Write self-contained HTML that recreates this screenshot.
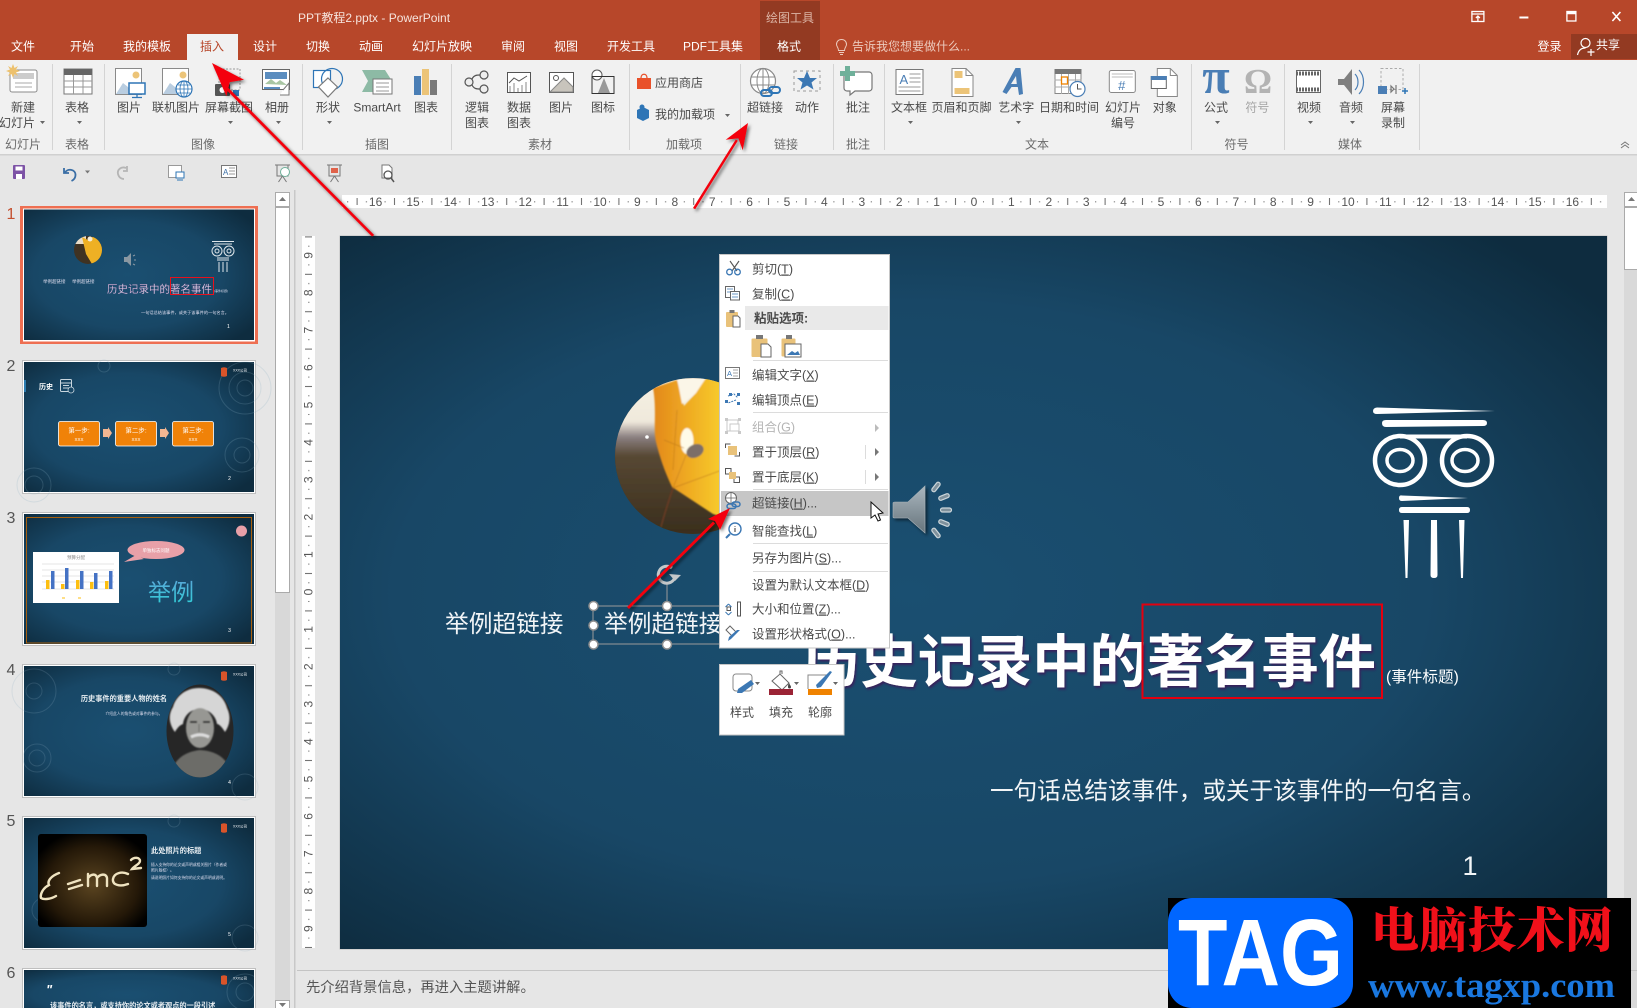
<!DOCTYPE html>
<html lang="zh"><head><meta charset="utf-8"><title>PPT教程2.pptx - PowerPoint</title>
<style>
html,body{margin:0;padding:0;width:1637px;height:1008px;overflow:hidden;background:#e6e6e6}
svg{display:block;position:absolute;left:0;top:0}
text{font-family:"Liberation Sans","Noto Sans CJK SC",sans-serif;font-size:12px;fill:#4a4a4a}
.m{text-anchor:middle}
.w{fill:#fff}
.g{fill:#6a6a6a}
.u{text-decoration:underline}
.r text{font-size:12px;fill:#555;text-anchor:middle}
.menu text{font-size:12.5px;fill:#4a4a4a}
</style></head><body>
<svg width="1637" height="1008" viewBox="0 0 1637 1008" xmlns="http://www.w3.org/2000/svg">
<defs>
<radialGradient id="sl" cx="45%" cy="50%" r="68%"><stop offset="0" stop-color="#1a4f71"/><stop offset=".6" stop-color="#184766"/><stop offset="1" stop-color="#0e2c3f"/></radialGradient>
<linearGradient id="leaf" x1="0" x2="1" y1="0" y2="0"><stop offset="0" stop-color="#e2881c"/><stop offset=".5" stop-color="#efaa22"/><stop offset="1" stop-color="#f7cc2c"/></linearGradient>
<linearGradient id="lbg" x1="0" x2="0" y1="0" y2="1"><stop offset="0" stop-color="#f6f1e4"/><stop offset=".28" stop-color="#f0e9dc"/><stop offset=".38" stop-color="#8a7f80"/><stop offset=".5" stop-color="#574833"/><stop offset="1" stop-color="#3a2e1d"/></linearGradient>
<linearGradient id="spk" x1="0" x2="0" y1="0" y2="1"><stop offset="0" stop-color="#aab6be"/><stop offset="1" stop-color="#66747c"/></linearGradient>
<linearGradient id="cy" x1="0" x2="0" y1="0" y2="1"><stop offset="0" stop-color="#5aa6d8"/><stop offset="1" stop-color="#30d0d8"/></linearGradient>
<radialGradient id="emc" cx="50%" cy="55%" r="60%"><stop offset="0" stop-color="#5a4420"/><stop offset=".7" stop-color="#241808"/><stop offset="1" stop-color="#000"/></radialGradient>
<pattern id="hr" width="37.4" height="13" patternUnits="userSpaceOnUse" patternTransform="translate(974,195)"><rect x="18.4" y="3" width="1" height="7" fill="#666"/><rect x="9" y="6" width="1" height="1.5" fill="#888"/><rect x="27.7" y="6" width="1" height="1.5" fill="#888"/></pattern>
<pattern id="vr" width="13" height="37.4" patternUnits="userSpaceOnUse" patternTransform="translate(302,592)"><rect x="3" y="18.4" width="7" height="1" fill="#666"/><rect x="6" y="9" width="1.5" height="1" fill="#888"/><rect x="6" y="27.7" width="1.5" height="1" fill="#888"/></pattern>
<clipPath id="cc"><circle cx="693" cy="456" r="78"/></clipPath>
<clipPath id="tc"><circle cx="88" cy="250" r="14"/></clipPath>
<clipPath id="t6"><rect x="24" y="970" width="230" height="38"/></clipPath>
<clipPath id="eo"><ellipse cx="200" cy="731" rx="33.5" ry="46.5"/></clipPath>
<filter id="sh" x="-20%" y="-20%" width="140%" height="140%"><feDropShadow dx="2" dy="2" stdDeviation="1.5" flood-color="#000" flood-opacity=".55"/></filter>
<filter id="ts" x="-5%" y="-20%" width="110%" height="140%"><feDropShadow dx="1.5" dy="2" stdDeviation="1" flood-color="#3a1f5a" flood-opacity=".95"/></filter>
<filter id="bl"><feGaussianBlur stdDeviation="1.6"/></filter>
<filter id="bs"><feGaussianBlur stdDeviation=".7"/></filter>
</defs>

<!-- title bar -->
<rect width="1637" height="60" fill="#b7472a"/>
<rect x="760" y="1" width="60" height="59" fill="#933a22"/>
<text x="298" y="22" style="fill:#f6e4dd">PPT教程2.pptx - PowerPoint</text>
<text x="790" y="22" class="m" style="fill:#dcb5a6">绘图工具</text>
<rect x="187" y="34" width="51" height="26" fill="#f1f1f1"/>
<text x="23" y="50.5" class="m w">文件</text><text x="82" y="50.5" class="m w">开始</text><text x="147" y="50.5" class="m w">我的模板</text>
<text x="212" y="50.5" class="m" style="fill:#b7472a">插入</text>
<text x="265" y="50.5" class="m w">设计</text><text x="318" y="50.5" class="m w">切换</text><text x="371" y="50.5" class="m w">动画</text><text x="442" y="50.5" class="m w">幻灯片放映</text><text x="513" y="50.5" class="m w">审阅</text><text x="566" y="50.5" class="m w">视图</text><text x="631" y="50.5" class="m w">开发工具</text><text x="713" y="50.5" class="m w">PDF工具集</text><text x="789" y="50.5" class="m w">格式</text>
<g fill="none" stroke="#eccabd" stroke-width="1"><path d="M841 40c-3 0-5 2-5 5 0 2 2 3 2 6h6c0-3 2-4 2-6 0-3-2-5-5-5zM838.5 53h5M839.5 55h3" transform="translate(.5,-.5)"/></g>
<text x="852" y="50.5" style="fill:#eccabd">告诉我您想要做什么...</text>
<text x="1549.500" y="50.5" class="m w">登录</text>
<rect x="1571" y="34" width="66" height="25" fill="#933a22"/>
<g fill="none" stroke="#fff" stroke-width="1.2" transform="translate(-2.5,0)"><circle cx="1588" cy="43" r="4.5"/><path d="M1580 55c1-5 4-7 8-7M1590 52h7M1593.5 49v7"/></g>
<text x="1608" y="49" class="m w">共享</text>
<!-- window buttons -->
<g fill="none" stroke="#fff" stroke-width="1.3" transform="translate(-2.6,0)"><rect x="1474.5" y="11.5" width="12" height="10"/><path d="M1474.5 14h12M1480.5 21v-5M1478.5 18l2-2 2 2"/><path d="M1522 17.5h9" stroke-width="2"/><rect x="1569.5" y="11.5" width="9" height="9.5"/><path d="M1569.5 13h9" stroke-width="2.5"/><path d="M1615 12l8 9M1623 12l-8 9" stroke-width="1.6"/></g>

<!-- ribbon -->
<rect y="60" width="1637" height="94" fill="#f1f1f1"/>
<rect y="154" width="1637" height="1.5" fill="#d0d0d0"/>
<g stroke="#d4d4d4" stroke-width="1"><path d="M52.5 64v86M104.5 64v86M302.5 64v86M451.5 64v86M629.5 64v86M740.5 64v86M833.5 64v86M884.5 64v86M1191.5 64v86M1284.5 64v86M1419.5 64v86"/></g>

<!-- ribbon labels -->
<text x="23" y="111.5" class="m">新建</text><text x="17" y="127" class="m">幻灯片</text>
<text x="77" y="111.5" class="m">表格</text>
<text x="129" y="111.5" class="m">图片</text><text x="176" y="111.5" class="m">联机图片</text><text x="229" y="111.5" class="m">屏幕截图</text><text x="277" y="111.5" class="m">相册</text>
<text x="328" y="111.5" class="m">形状</text><text x="377" y="111.5" class="m">SmartArt</text><text x="426" y="111.5" class="m">图表</text>
<text x="477" y="111.5" class="m">逻辑</text><text x="477" y="127" class="m">图表</text><text x="519" y="111.5" class="m">数据</text><text x="519" y="127" class="m">图表</text><text x="561" y="111.5" class="m">图片</text><text x="603" y="111.5" class="m">图标</text>
<text x="655" y="87">应用商店</text><text x="655" y="118.5">我的加载项</text>
<text x="765" y="111.5" class="m">超链接</text><text x="807" y="111.5" class="m">动作</text>
<text x="858" y="111.5" class="m">批注</text>
<text x="909" y="111.5" class="m">文本框</text><text x="961.5" y="111.5" class="m">页眉和页脚</text><text x="1016.3" y="111.5" class="m">艺术字</text><text x="1069" y="111.5" class="m">日期和时间</text><text x="1123" y="111.5" class="m">幻灯片</text><text x="1123" y="127" class="m">编号</text><text x="1164.7" y="111.5" class="m">对象</text>
<text x="1216" y="111.5" class="m">公式</text><text x="1257.4" y="111.5" class="m" style="fill:#a5a5a5">符号</text>
<text x="1309" y="111.5" class="m">视频</text><text x="1351" y="111.5" class="m">音频</text><text x="1393" y="111.5" class="m">屏幕</text><text x="1393" y="127" class="m">录制</text>
<text x="23" y="148.5" class="m g">幻灯片</text><text x="77" y="148.5" class="m g">表格</text><text x="203" y="148.5" class="m g">图像</text><text x="377" y="148.5" class="m g">插图</text><text x="540" y="148.5" class="m g">素材</text><text x="684" y="148.5" class="m g">加载项</text><text x="786" y="148.5" class="m g">链接</text><text x="858" y="148.5" class="m g">批注</text><text x="1037" y="148.5" class="m g">文本</text><text x="1236.5" y="148.5" class="m g">符号</text><text x="1350" y="148.5" class="m g">媒体</text>
<!-- dropdown carets -->
<g fill="#666"><path d="M40 121h5l-2.5 3zM77 121h5l-2.5 3zM228 121h5l-2.500 3zM276 121h5l-2.500 3zM327 121h5l-2.500 3zM725 114h5l-2.500 3zM908 121h5l-2.500 3zM1016 121h5l-2.500 3zM1215 121h5l-2.500 3zM1308 121h5l-2.500 3zM1350 121h5l-2.500 3z"/></g>
<path d="M1621 145l4-3 4 3M1621 148l4-3 4 3" fill="none" stroke="#777" stroke-width="1"/>

<!-- ribbon icons -->
<rect x="10" y="70" width="27" height="22" rx="2" fill="#fff" stroke="#8a8a8a"/><rect x="13" y="73" width="21" height="6" fill="#ccc"/><path d="M15 83h17M15 87h17" stroke="#aaa"/>
<path d="M13 64l1.500 4 3.500-2-2 3.500 4 1.500-4 1.500 2 3.500-3.500-2-1.500 4-1.500-4-3.500 2 2-3.500-4-1.500 4-1.500-2-3.500 3.500 2z" fill="#edc16d"/>
<rect x="64" y="69" width="28" height="25" fill="#fff" stroke="#777"/><rect x="64" y="69" width="28" height="6" fill="#666"/><path d="M64 81h28M64 87h28M73.500 75v19M83 75v19" stroke="#999"/>
<rect x="115.500" y="68.500" width="26" height="26" fill="#fff" stroke="#8a8a8a"/><circle cx="136" cy="75" r="3.500" fill="#ecc478"/><path d="M116 94l7-11 5 4 4 7z" fill="#b9cde0"/>
<rect x="129" y="83" width="16" height="11" fill="#fff" stroke="#2e75b6" stroke-width="1.500"/><path d="M137 94v3M132 97.500h10" stroke="#2e75b6" stroke-width="1.300"/>
<rect x="162.500" y="68.500" width="26" height="26" fill="#fff" stroke="#8a8a8a"/><circle cx="183" cy="75" r="3.500" fill="#ecc478"/><path d="M163 94l7-11 5 4 4 7z" fill="#b9cde0"/>
<circle cx="184" cy="89" r="8" fill="#fff" stroke="#2e75b6" stroke-width="1.200"/><path d="M176 89h16M184 81v16M178 85h12M178 93h12" stroke="#2e75b6" stroke-width=".8"/><ellipse cx="184" cy="89" rx="4" ry="8" fill="none" stroke="#2e75b6" stroke-width=".8"/>
<rect x="219" y="69" width="21" height="21" fill="none" stroke="#999" stroke-dasharray="2 1.500"/><rect x="215" y="84" width="15" height="12" rx="1" fill="#555"/><circle cx="222.500" cy="90" r="3" fill="#fff"/><rect x="233" y="90" width="6" height="6" fill="#2e75b6"/>
<rect x="262.500" y="69.500" width="27" height="20" fill="#fff" stroke="#666"/><rect x="265" y="72" width="22" height="7" fill="#5b8dbf"/><path d="M265 84l6-5 5 4 4-3 7 5z" fill="#a9c6a3"/><path d="M283 90l6-7v12h-9" fill="#fff" stroke="#777"/><rect x="264" y="87" width="16" height="2" fill="#5b8dbf"/>
<rect x="313.500" y="70.500" width="17" height="17" fill="#fff" stroke="#2e75b6" stroke-width="1.200"/><circle cx="332" cy="79" r="10.500" fill="none" stroke="#2e75b6" stroke-width="1.200"/><path d="M328 78l9.500 9-9.500 10-9.500-10z" fill="#fff" stroke="#7a7a7a" stroke-width="1.200"/>
<path d="M362 70h23l7 11-7 11h-23l6-11z" fill="#8dbaa5"/><rect x="373" y="79" width="19" height="15" fill="#fff" stroke="#777"/><path d="M376 83h13M376 87h13M376 91h13" stroke="#999"/>
<rect x="414" y="76" width="7" height="19" fill="#4a7eb5"/><rect x="422" y="69" width="7" height="26" fill="#ecc478"/><rect x="430" y="80" width="7" height="15" fill="#7a7a7a"/>
<g fill="#eee" stroke="#555" stroke-width="1.200"><circle cx="484" cy="75" r="4"/><circle cx="484" cy="89" r="4"/><circle cx="469" cy="82" r="4"/></g><path d="M472 79c2-4 5-4 8-4M472 85c2 4 5 4 8 4" fill="none" stroke="#555" stroke-width="1.200"/>
<rect x="507.500" y="72.500" width="23" height="20" fill="#fff" stroke="#555"/><path d="M510 92v-6M514 92v-9M518 92v-4M522 92v-7M526 92v-10" stroke="#888"/><path d="M509 83l5-5 5 3 8-5" fill="none" stroke="#555"/>
<rect x="549.500" y="72.500" width="24" height="20" fill="#fff" stroke="#555"/><circle cx="556" cy="78" r="2.500" fill="none" stroke="#555"/><path d="M550 92l14-14 9 9v5z" fill="#c8c4bc" stroke="#888"/>
<circle cx="597" cy="75" r="5" fill="#fff" stroke="#555"/><rect x="592" y="76.500" width="22" height="17" fill="none" stroke="#333"/><path d="M604 78l6 15h-12z" fill="#999"/>
<path d="M637 78h14v11h-14z" fill="#e9512a"/><path d="M641 78c0-5 6-5 6 0" fill="none" stroke="#e9512a" stroke-width="1.300"/>
<path d="M637 110l6-3 6 3v8l-6 3-6-3z" fill="#2e75b6"/><circle cx="642" cy="107" r="2.500" fill="#2e75b6"/>
<circle cx="763" cy="81" r="12.500" fill="#fff" stroke="#8a8a8a" stroke-width="1.200"/><ellipse cx="763" cy="81" rx="6" ry="12.500" fill="none" stroke="#8a8a8a"/><path d="M751 77h24M751 85h24M763 68v26" stroke="#8a8a8a"/>
<rect x="761" y="90" width="11" height="6" rx="3" fill="none" stroke="#2e75b6" stroke-width="2"/><rect x="769" y="87" width="11" height="6" rx="3" fill="none" stroke="#2e75b6" stroke-width="2"/>
<rect x="794" y="71" width="26" height="20" fill="none" stroke="#999" stroke-dasharray="3 3"/><path d="M807 71l3 7h7l-5.500 4.500 2 7-6.500-4-6.500 4 2-7-5.500-4.500h7z" fill="#3c78b4"/>
<path d="M847 72h22a3 3 0 0 1 3 3v13a3 3 0 0 1-3 3h-14l-5 4v-4h-3a3 3 0 0 1-3-3V75a3 3 0 0 1 3-3z" fill="#fff" stroke="#777" stroke-width="1.200"/><path d="M845 66h5v5h5v5h-5v5h-5v-5h-5v-5h5z" fill="#6fb09a"/>
<g transform="translate(-.5,0)">
<rect x="896.500" y="69.500" width="27" height="25" fill="#fff" stroke="#777"/><text x="900" y="84" style="font-size:13px;fill:#4a7eb5">A</text><path d="M910 74h11M910 78h11M910 82h11M899 87h22M899 91h22" stroke="#999"/>
<path d="M952.500 68.500h14l7 7v21h-21z" fill="#fff" stroke="#888"/><path d="M966.500 68.500v7h7" fill="none" stroke="#888"/><rect x="955" y="71" width="8" height="7" fill="#ecc478"/><rect x="955" y="88" width="15" height="6" fill="#ecc478"/>
<path d="M1016 68h5l2.500 26-4 1-1.200-8h-6.300l-5 7-4-2zM1016.500 76l-5 8h5.800z" fill="#4a7eb5" fill-rule="evenodd"/>
<rect x="1055.500" y="69.500" width="26" height="24" fill="#fff" stroke="#888"/><rect x="1055" y="69" width="27" height="5" fill="#777"/><path d="M1055 80h27M1055 87h27M1062 74v20M1069 74v20M1076 74v20" stroke="#aaa"/><rect x="1062" y="77" width="6" height="7" fill="#fff" stroke="#ef8200" stroke-width="1.300"/><circle cx="1078" cy="89" r="7.500" fill="#fff" stroke="#4a7eb5" stroke-width="1.200"/><path d="M1078 84v5h4" fill="none" stroke="#555"/>
</g>
<g transform="translate(-1.200,0)">
<rect x="1110.500" y="70.500" width="26" height="22" rx="2" fill="#fff" stroke="#888"/><path d="M1113 74h21M1113 77h21" stroke="#bbb"/><text x="1123" y="90" class="m" style="font-size:13px;fill:#4a7eb5">#</text>
<path d="M1158.500 68.500h13l7 7v21h-20z" fill="#fff" stroke="#888"/><path d="M1171.500 68.500v7h7" fill="none" stroke="#888"/><rect x="1152.500" y="76.500" width="15" height="12" fill="#fff" stroke="#666"/><rect x="1152" y="76" width="16" height="4" fill="#4a7eb5"/>
</g>
<text x="1216" y="93" class="m" style="font-size:50px;font-weight:bold;font-family:'Liberation Serif',serif;fill:#4a7eb5">π</text>
<text x="1258" y="93" class="m" style="font-size:35px;font-weight:bold;font-family:'Liberation Serif',serif;fill:#b3b3b3">Ω</text>
<g transform="translate(-2,0)">
<rect x="1298.500" y="70.500" width="24" height="22" fill="#fff" stroke="#666"/><path d="M1298 73.500h25M1298 89.500h25" stroke="#666" stroke-width="4" stroke-dasharray="2 1"/>
<path d="M1340 79h6l8-10v26l-8-10h-6z" fill="#7f7f7f"/><path d="M1357 74c4 4 4 12 0 16M1361 70c6 6 6 18 0 24" fill="none" stroke="#4a7eb5" stroke-width="1.200"/>
<rect x="1383" y="68.500" width="22" height="21" fill="none" stroke="#aaa" stroke-dasharray="2.500 2"/><rect x="1380" y="86" width="9" height="8" fill="#4a7eb5"/><path d="M1393 86l3 3-3 3zM1398 85v9" fill="none" stroke="#777" stroke-width="1.200"/><path d="M1404 91h6M1407 88v6" stroke="#2e75b6" stroke-width="1.500"/>
</g>

<!-- QAT -->
<rect x="13" y="165" width="12" height="14" rx="1" fill="#7d53a6"/><rect x="15.500" y="166.500" width="7" height="4" fill="#fff"/><rect x="16" y="174" width="6" height="5" fill="#fff"/>
<path d="M64 168v5h5M64.500 173c3-5 11-4 11 2 0 3-2 5-4 6" fill="none" stroke="#3a6ea5" stroke-width="1.800"/><path d="M85 170.500h5l-2.500 3z" fill="#777"/>
<path d="M127 166v5h-4M126 168c-5-2-9 2-8 6 1 4 4 5 6 5" fill="none" stroke="#b5b5b5" stroke-width="1.800"/>
<rect x="168.500" y="165.500" width="13" height="12" fill="#fff" stroke="#999"/><rect x="176" y="172" width="8" height="6" fill="#fff" stroke="#2e75b6"/><path d="M177 180h6" stroke="#2e75b6"/>
<rect x="221.500" y="165.500" width="15" height="12" fill="#fff" stroke="#777"/><text x="223" y="175" style="font-size:8px;fill:#3a6ea5">A</text><path d="M229 168h6M229 171h6M229 174h6" stroke="#999"/>
<path d="M275 165h15M277 165v11h11v-11M282.500 176l-4 6M282.500 176l4 6" fill="none" stroke="#777"/><circle cx="285" cy="172" r="4.500" fill="#fff" stroke="#6fb09a"/>
<path d="M327 165h15M329 165v11h11v-11M334.500 176l-4 6M334.500 176l4 6" fill="none" stroke="#777"/><rect x="331" y="168" width="7" height="5" fill="#e0624a"/>
<path d="M382 165h7l3 3v10h-10z" fill="#fff" stroke="#777"/><circle cx="388" cy="175" r="4" fill="none" stroke="#555" stroke-width="1.300"/><path d="M391 178l3 4" stroke="#555" stroke-width="1.500"/>

<!-- left panel scrollbar -->
<rect x="275" y="192" width="15" height="816" fill="#d8d8d8"/>
<rect x="275.500" y="192.500" width="14" height="14" fill="#fff" stroke="#aaa"/><path d="M279 201h7l-3.500-4z" fill="#777"/>
<rect x="275.500" y="207.500" width="14" height="385" fill="#fff" stroke="#aaa"/>
<rect x="275.500" y="1000.500" width="14" height="8" fill="#fff" stroke="#aaa"/><path d="M279 1003h7l-3.500 4z" fill="#777"/>
<rect x="294" y="190" width="1.500" height="818" fill="#c8c8c8"/>

<!-- thumbnails -->
<text x="11" y="219" class="m" style="font-size:16px;fill:#c4502f">1</text><text x="11" y="371" class="m" style="font-size:16px;fill:#555">2</text><text x="11" y="523" class="m" style="font-size:16px;fill:#555">3</text><text x="11" y="675" class="m" style="font-size:16px;fill:#555">4</text><text x="11" y="826" class="m" style="font-size:16px;fill:#555">5</text><text x="11" y="978" class="m" style="font-size:16px;fill:#555">6</text>
<rect x="20" y="206" width="238" height="138" fill="#ee6f52"/><rect x="23" y="208.500" width="232" height="133" fill="#fff"/><rect x="24" y="209.500" width="230" height="130.500" fill="url(#sl)"/>
<rect x="22.500" y="360.500" width="233" height="133" fill="#fff" stroke="#bfbfbf"/><rect x="24" y="362" width="230" height="130" fill="url(#sl)"/>
<rect x="22.500" y="512.500" width="233" height="133" fill="#fff" stroke="#bfbfbf"/><rect x="24" y="514" width="230" height="130" fill="url(#sl)"/>
<rect x="22.500" y="664.500" width="233" height="133" fill="#fff" stroke="#bfbfbf"/><rect x="24" y="666" width="230" height="130" fill="url(#sl)"/>
<rect x="22.500" y="816.500" width="233" height="133" fill="#fff" stroke="#bfbfbf"/><rect x="24" y="818" width="230" height="130" fill="url(#sl)"/>
<rect x="22.500" y="968.500" width="233" height="50" fill="#fff" stroke="#bfbfbf"/><rect x="24" y="970" width="230" height="50" fill="url(#sl)"/>

<!-- thumb 1 -->
<circle cx="88" cy="250" r="14" fill="#3f3222"/><g clip-path="url(#tc)"><rect x="74" y="236" width="12" height="8" fill="#e8dcc8"/><path d="M82 237l6 3 6-4h8v26l-10 2-6-10z" fill="#eeb024"/><circle cx="90" cy="239" r="2.500" fill="#f3ecd8"/></g>
<path d="M124 257h3l4-4v13l-4-4h-3z" fill="#8a98a2"/><path d="M133 256l2-1M134 260h2M133 264l2 1" stroke="#8a98a2"/>
<g fill="none" stroke="#dfe6ea" stroke-width="1"><path d="M212 241.500h22M214 244h18"/><circle cx="217" cy="251" r="5"/><circle cx="229" cy="251" r="5"/><circle cx="217" cy="251" r="2"/><circle cx="229" cy="251" r="2"/><path d="M217 258h12M217 260h12M219 262v10M223 262v10M227 262v10"/></g>
<text x="43" y="283" style="font-size:4.500px;fill:#dde">举例超链接</text><text x="72" y="283" style="font-size:4.500px;fill:#dde">举例超链接</text>
<text x="107" y="292.500" style="font-size:10.500px;fill:#e6dced;stroke:#5a3a78;stroke-width:.2">历史记录中的著名事件</text>
<rect x="170.500" y="277.500" width="43" height="17" fill="none" stroke="#e8101c"/>
<text x="214" y="292" style="font-size:3px;fill:#dde">(事件标题)</text>
<text x="141" y="314" style="font-size:4.200px;fill:#dde">一句话总结该事件，或关于该事件的一句名言。</text>
<text x="227" y="328" style="font-size:5px;fill:#fff">1</text>

<!-- thumb 2 -->
<g fill="none" stroke="#8fb0c4" stroke-opacity=".22"><circle cx="245" cy="388" r="26"/><circle cx="245" cy="388" r="16"/><circle cx="245" cy="388" r="8"/><circle cx="242" cy="455" r="17"/><circle cx="242" cy="455" r="8"/><circle cx="34" cy="485" r="17"/><circle cx="34" cy="485" r="9"/><circle cx="104" cy="366" r="6"/></g>
<rect x="24" y="380" width="2" height="12" fill="#2b7cb0"/>
<text x="39" y="389" style="font-size:7px;font-weight:bold;fill:#fff">历史</text>
<rect x="60.500" y="379.500" width="11" height="12" rx="1" fill="none" stroke="#c9d6de"/><path d="M60 383h12M63 385.500h6M63 388h6" stroke="#c9d6de"/><circle cx="71" cy="390" r="3" fill="#184766" stroke="#c9d6de" stroke-width=".8"/>
<path d="M221 368c2-1 4-1 6 0v8c-2 1-4 1-6 0z" fill="#d9542a"/><text x="233" y="371.500" style="font-size:3.500px;fill:#fff">XXX公司</text>
<g fill="#f08208" stroke="#fff" stroke-width=".8"><rect x="58.500" y="421.500" width="41" height="24.500" rx="2"/><rect x="115.500" y="421.500" width="41" height="24.500" rx="2"/><rect x="172.500" y="421.500" width="41" height="24.500" rx="2"/></g>
<path d="M103 429h5v-2l4 6-4 6v-2h-5zM160 429h5v-2l4 6-4 6v-2h-5z" fill="#f2b692"/>
<text x="79" y="432.500" class="m w" style="font-size:6.500px">第一步:</text><text x="136" y="432.500" class="m w" style="font-size:6.500px">第二步:</text><text x="193" y="432.500" class="m w" style="font-size:6.500px">第三步:</text>
<text x="79" y="441" class="m w" style="font-size:4.500px">XXX</text><text x="136" y="441" class="m w" style="font-size:4.500px">XXX</text><text x="193" y="441" class="m w" style="font-size:4.500px">XXX</text>
<text x="229.500" y="480" class="m w" style="font-size:5px">2</text>

<!-- thumb 3 -->
<rect x="26.500" y="517.500" width="225" height="125.500" fill="none" stroke="#a8600e" stroke-width="1"/>
<circle cx="241.500" cy="531" r="5.500" fill="#e8a0a8"/>
<rect x="33" y="552" width="86" height="51" fill="#fff"/>
<text x="76" y="559" class="m" style="font-size:4.500px;fill:#888">预算分配</text>
<path d="M42 564h72M42 570h72M42 576h72M42 582h72M42 589h72" stroke="#ddd" stroke-width=".7"/>
<g fill="#fdbf11"><rect x="46" y="580" width="3.500" height="9"/><rect x="61" y="584" width="3.500" height="5"/><rect x="76" y="580" width="3.500" height="9"/><rect x="90" y="582" width="3.500" height="7"/><rect x="105" y="581" width="3.500" height="8"/></g>
<g fill="#4472c4"><rect x="51" y="571" width="3.500" height="18"/><rect x="65" y="568" width="3.500" height="21"/><rect x="80" y="571" width="3.500" height="18"/><rect x="94" y="573" width="3.500" height="16"/><rect x="109" y="571" width="3.500" height="18"/></g>
<path d="M62 598h3M78 598h3" stroke="#fdbf11"/>
<ellipse cx="156" cy="550" rx="28.500" ry="9" fill="#e8a0a8"/><path d="M136 555l-12 7 20-3z" fill="#e8a0a8"/>
<text x="156" y="552" class="m w" style="font-size:4.500px">单独标志问题</text>
<text x="171" y="600" class="m" style="font-size:23px;fill:url(#cy)">举例</text>
<text x="229.500" y="632" class="m w" style="font-size:5px">3</text>

<!-- thumb 4 -->
<g fill="none" stroke="#8fb0c4" stroke-opacity=".2"><circle cx="34" cy="691" r="22"/><circle cx="34" cy="691" r="8"/><circle cx="37" cy="758" r="14"/><circle cx="37" cy="758" r="8"/><circle cx="245" cy="787" r="13"/><circle cx="174" cy="669" r="6"/></g>
<path d="M221 672c2-1 4-1 6 0v8c-2 1-4 1-6 0z" fill="#d9542a"/><text x="233" y="675.500" style="font-size:3.500px;fill:#fff">XXX公司</text>
<text x="124" y="701" class="m" style="font-size:7.200px;font-weight:bold;fill:#e8eef2">历史事件的重要人物的姓名</text>
<text x="134" y="715" class="m" style="font-size:3.800px;fill:#dde">介绍此人的角色或对事件的参与。</text>
<ellipse cx="200" cy="731" rx="33.5" ry="46.5" fill="#262626"/>
<g clip-path="url(#eo)"><g filter="url(#bs)">
<path d="M170 778c2-16 12-26 30-28 18 1 30 10 32 28z" fill="#6c6c68"/>
<path d="M199 688c14 0 25 8 28 20 4 8 3 17-2 24-3-5-6-8-8-8-1-8-8-15-17-15-10 0-16 7-17 15-3 1-6 4-8 8-6-8-7-17-2-25 3-11 13-19 26-19z" fill="#d6d6d6"/>
<ellipse cx="200" cy="728" rx="14" ry="20" fill="#979793"/>
<path d="M190 722h7M203 722h7" stroke="#2c2c2c" stroke-width="2"/><path d="M199 724v8" stroke="#6a6a66"/>
<path d="M191 737c6-3 12-3 18 0" stroke="#ddd" stroke-width="3" fill="none"/></g></g>
<text x="229.500" y="784" class="m w" style="font-size:5px">4</text>

<!-- thumb 5 -->
<g fill="none" stroke="#8fb0c4" stroke-opacity=".2"><circle cx="245" cy="938" r="13"/><circle cx="44" cy="910" r="12"/><circle cx="174" cy="821" r="6"/></g>
<path d="M221 824c2-1 4-1 6 0v8c-2 1-4 1-6 0z" fill="#d9542a"/><text x="233" y="827.500" style="font-size:3.500px;fill:#fff">XXX公司</text>
<rect x="38" y="834" width="109" height="93" rx="3" fill="url(#emc)"/>
<g fill="none" stroke="#efe3c0" stroke-width="2.400" stroke-linecap="round"><path d="M59 873c-8 3-12 8-10 12-6 3-9 9-8 13 3 2 10 1 15-2"/><path d="M68 884l12-4M69 889l13-4"/>
<path d="M88 886v-12M88 878c3-4 8-5 9 0v8M97 878c3-4 9-5 10 0v8"/><path d="M128 874c-6-3-14-1-15 5-1 6 7 8 15 5"/><path d="M131 860c3-3 9-3 9 1 0 3-6 5-8 8l9-1"/></g>
<text x="151" y="853" style="font-size:7.200px;font-weight:bold;fill:#e8eef2">此处照片的标题</text>
<text x="151" y="866" style="font-size:3.800px;fill:#dde">插入支持你的论文或声明或相关图片（作者或</text>
<text x="151" y="871.500" style="font-size:3.800px;fill:#dde">照片版权）。</text>
<text x="151" y="879" style="font-size:3.800px;fill:#dde">请说明照片如何支持你的论文或声明或说明。</text>
<text x="229.500" y="936" class="m w" style="font-size:5px">5</text>

<!-- thumb 6 -->
<g clip-path="url(#t6)"><circle cx="245" cy="992" r="18" fill="none" stroke="#8fb0c4" stroke-opacity=".22"/><circle cx="245" cy="992" r="9" fill="none" stroke="#8fb0c4" stroke-opacity=".22"/>
<text x="46" y="994" style="font-size:13px;font-weight:bold;font-style:italic;fill:#fff">"</text>
<text x="50" y="1008" style="font-size:7.200px;font-weight:bold;fill:#e8eef2">该事件的名言，或支持你的论文或者观点的一段引述</text></g>
<path d="M221 976c2-1 4-1 6 0v8c-2 1-4 1-6 0z" fill="#d9542a"/><text x="233" y="979.500" style="font-size:3.500px;fill:#fff">XXX公司</text>

<!-- rulers -->
<rect x="342" y="195" width="1265" height="13" fill="#fff"/><rect x="342" y="195" width="1265" height="13" fill="url(#hr)"/>
<rect x="302" y="236" width="13" height="712" fill="#fff"/><rect x="302" y="236" width="13" height="712" fill="url(#vr)"/>
<g class="r">
<text x="375.600" y="206">16</text><text x="413" y="206">15</text><text x="450.400" y="206">14</text><text x="487.800" y="206">13</text><text x="525.200" y="206">12</text><text x="562.600" y="206">11</text><text x="600" y="206">10</text><text x="637.400" y="206">9</text><text x="674.800" y="206">8</text><text x="712.200" y="206">7</text><text x="749.600" y="206">6</text><text x="787" y="206">5</text><text x="824.400" y="206">4</text><text x="861.800" y="206">3</text><text x="899.200" y="206">2</text><text x="936.600" y="206">1</text><text x="974" y="206">0</text><text x="1011.400" y="206">1</text><text x="1048.800" y="206">2</text><text x="1086.200" y="206">3</text><text x="1123.600" y="206">4</text><text x="1161" y="206">5</text><text x="1198.400" y="206">6</text><text x="1235.800" y="206">7</text><text x="1273.200" y="206">8</text><text x="1310.600" y="206">9</text><text x="1348" y="206">10</text><text x="1385.400" y="206">11</text><text x="1422.800" y="206">12</text><text x="1460.200" y="206">13</text><text x="1497.600" y="206">14</text><text x="1535" y="206">15</text><text x="1572.400" y="206">16</text>
<text transform="translate(312.500,255.400) rotate(-90)">9</text><text transform="translate(312.500,292.800) rotate(-90)">8</text><text transform="translate(312.500,330.200) rotate(-90)">7</text><text transform="translate(312.500,367.600) rotate(-90)">6</text><text transform="translate(312.500,405) rotate(-90)">5</text><text transform="translate(312.500,442.400) rotate(-90)">4</text><text transform="translate(312.500,479.800) rotate(-90)">3</text><text transform="translate(312.500,517.200) rotate(-90)">2</text><text transform="translate(312.500,554.600) rotate(-90)">1</text><text transform="translate(312.500,592) rotate(-90)">0</text><text transform="translate(312.500,629.400) rotate(-90)">1</text><text transform="translate(312.500,666.800) rotate(-90)">2</text><text transform="translate(312.500,704.200) rotate(-90)">3</text><text transform="translate(312.500,741.600) rotate(-90)">4</text><text transform="translate(312.500,779) rotate(-90)">5</text><text transform="translate(312.500,816.400) rotate(-90)">6</text><text transform="translate(312.500,853.800) rotate(-90)">7</text><text transform="translate(312.500,891.200) rotate(-90)">8</text><text transform="translate(312.500,928.600) rotate(-90)">9</text>
</g>

<!-- right scrollbar -->
<rect x="1624" y="192" width="13" height="816" fill="#d9d9d9"/>
<rect x="1624.500" y="192.500" width="13" height="14" fill="#fff" stroke="#aaa"/><path d="M1628 201h7l-3.500-4z" fill="#777"/>
<rect x="1624.500" y="207.500" width="13" height="62" fill="#fff" stroke="#aaa"/>

<!-- notes -->
<path d="M297 970.500H1637" stroke="#c4c4c4"/>
<text x="306" y="992" style="font-size:14.300px;fill:#555">先介绍背景信息，再进入主题讲解。</text>

<!-- main slide -->
<rect x="339.500" y="235.500" width="1268" height="714" fill="#bcbcbc"/>
<rect x="340" y="236" width="1267" height="713" fill="url(#sl)"/>

<!-- leaf -->
<circle cx="693" cy="456" r="78" fill="#40331f"/>
<g clip-path="url(#cc)">
<rect x="610" y="378" width="170" height="156" fill="url(#lbg)" filter="url(#bl)"/>
<g filter="url(#bs)">
<path d="M653 388C657 410 653 430 656 442C660 458 664 470 672 487L713 514L722 517V378H705L696 393L684 406L677 380Z" fill="url(#leaf)"/>
<path d="M677 378L682 404L696 393L706 378Z" fill="#fbf6e8"/>
<ellipse cx="687" cy="441" rx="6.500" ry="13" fill="#fffbe8"/><ellipse cx="695" cy="451" rx="9" ry="6.500" fill="#7c6e68" transform="rotate(-25 695 451)"/>
<path d="M673 488C668 503 664 515 661 527" stroke="#6b3a20" stroke-width="1.500" fill="none"/>
<path d="M673 488L686 455M673 488L722 470M664 440L684 448M677 410L673 470" stroke="#b9741a" stroke-width=".7" fill="none" opacity=".7"/>
</g>
<circle cx="647" cy="437" r="1.800" fill="#fff"/>
</g>

<!-- text boxes -->
<text x="445" y="632" style="font-size:23.700px;fill:#f2f5f7">举例超链接</text>
<path d="M667 583v23M593 606H760M593 644H760M593 606V644" stroke="#9a9a9a" stroke-width="1" fill="none"/>
<text x="604" y="632" style="font-size:23.700px;fill:#f2f5f7">举例超链接</text>
<g fill="#fff" stroke="#8f8f8f" stroke-width="1.500"><circle cx="593.500" cy="606" r="4.500"/><circle cx="667" cy="606" r="4.500"/><circle cx="593.500" cy="625.500" r="4.500"/><circle cx="593.500" cy="644.500" r="4.500"/><circle cx="667" cy="644.500" r="4.500"/></g>
<path d="M675 577a8.500 8.500 0 1 1-3-9" fill="none" stroke="#c4c8ca" stroke-width="3"/><path d="M669 574l12 1-6 6z" fill="#c4c8ca"/>

<!-- speaker -->
<path d="M893 503q0-1 2-1h13l17-16v47l-17-15h-13q-2 0-2-1z" fill="url(#spk)" stroke="#aab4ba" stroke-width=".6" filter="url(#sh)"/>
<g fill="#7f919c" stroke="#ccd6da" stroke-width="1.200">
<rect x="930.500" y="485" width="11" height="4" rx="2" transform="rotate(-52 936 487)"/><rect x="938.500" y="495" width="11" height="4" rx="2" transform="rotate(-22 944 497)"/><rect x="940.500" y="508" width="11" height="4" rx="2"/><rect x="938.500" y="521" width="11" height="4" rx="2" transform="rotate(22 944 523)"/><rect x="930.500" y="531" width="11" height="4" rx="2" transform="rotate(52 936 533)"/>
</g>

<!-- column icon -->
<g fill="#fff" stroke="none">
<path d="M1373 411q0-3 4-3.500l118 3.500-118 3q-4 0-4-3zM1382 423q0-3 4-3l97 0q4 0 4 3t-4 3l-97 1q-4 0-4-4z"/>
<path d="M1402 495.500l66 2.500-66 3q-3 0-3-3t3-2.500zM1402 507l65 0q3 0 3 3t-3 3l-65 0q-3 0-3-3t3-3z"/>
<path d="M1403.500 520h5.500l-1.500 58h-2zM1431 520h6l.5 55q0 3-3.500 3t-3.500-3zM1459 520h5.500l-1.500 58h-2z"/>
</g>
<g fill="none" stroke="#fff">
<ellipse cx="1400" cy="460.500" rx="25" ry="24.500" stroke-width="4.500"/>
<ellipse cx="1400" cy="460.500" rx="13" ry="11" stroke-width="3.500"/>
<ellipse cx="1467" cy="460.500" rx="25" ry="24.500" stroke-width="4.500"/>
<ellipse cx="1465" cy="460.500" rx="13" ry="11" stroke-width="3.500"/>
<path d="M1400 436.500H1467" stroke-width="4"/>
</g>

<!-- main title -->
<g filter="url(#ts)"><text x="803" y="682" style="font-size:57.300px;font-weight:bold;fill:#fff">历史记录中的著名事件</text></g>
<rect x="1142.500" y="604.500" width="239.500" height="93.500" fill="none" stroke="#e3000f" stroke-width="2"/>
<text x="1386" y="682" style="font-size:15.600px;fill:#fff">(事件标题)</text>
<text x="990" y="799" style="font-size:23.600px;fill:#f2f5f7">一句话总结该事件，或关于该事件的一句名言。</text>
<text x="1470" y="875" class="m" style="font-size:27px;fill:#f2f5f7">1</text>

<!-- arrows under menu -->
<g fill="#f4000a" stroke="none" filter="url(#sh)">
<path d="M374.200 235L226 85.500L224 87.500L372 236.500Z"/>
<path d="M212 63L244 79.700L229.700 82.100L226.400 96.100Z"/>
<path d="M693 208L735.800 139.500L737.800 140.700L695.200 209.300Z"/>
<path d="M748 123L742.700 150.300L738.400 138.200L725.700 139.700Z"/>
</g>

<!-- context menu -->
<rect x="719.500" y="254.500" width="170" height="393.500" fill="#fff" stroke="#c6c6c6"/>
<rect x="745" y="306" width="143.500" height="24" fill="#e9e9e9"/>
<rect x="721" y="491" width="167.500" height="25" fill="#c6c6c6"/>
<g stroke="#dcdcdc"><path d="M753 360.500H888M753 412.500H888M753 489.500H888M753 543.500H888M753 571.500H888"/><path d="M865.500 445v14M865.500 470v14"/></g>
<g class="menu">
<text x="752" y="273.500">剪切(<tspan class="u">T</tspan>)</text>
<text x="752" y="298.500">复制(<tspan class="u">C</tspan>)</text>
<text x="754" y="322.500" style="font-weight:bold">粘贴选项:</text>
<text x="752" y="379.500">编辑文字(<tspan class="u">X</tspan>)</text>
<text x="752" y="404.500">编辑顶点(<tspan class="u">E</tspan>)</text>
<text x="752" y="431.500" style="fill:#b5b5b5">组合(<tspan class="u">G</tspan>)</text>
<text x="752" y="456.500">置于顶层(<tspan class="u">R</tspan>)</text>
<text x="752" y="481.500">置于底层(<tspan class="u">K</tspan>)</text>
<text x="752" y="507.500">超链接(<tspan class="u">H</tspan>)...</text>
<text x="752" y="535.500">智能查找(<tspan class="u">L</tspan>)</text>
<text x="752" y="562.500">另存为图片(<tspan class="u">S</tspan>)...</text>
<text x="752" y="589.500">设置为默认文本框(<tspan class="u">D</tspan>)</text>
<text x="752" y="613.500">大小和位置(<tspan class="u">Z</tspan>)...</text>
<text x="752" y="638.500">设置形状格式(<tspan class="u">O</tspan>)...</text>
</g>
<path d="M875 424v8l4-4z" fill="#bbb"/><path d="M875 448v8l4-4zM875 473v8l4-4z" fill="#777"/>
<!-- menu icons -->
<g fill="none" stroke="#555" stroke-width="1.100"><path d="M730 261l7 10M739 261l-7 10"/></g><g fill="none" stroke="#3c78b4" stroke-width="1.300"><circle cx="729.500" cy="272" r="2.800"/><circle cx="737.500" cy="272" r="2.800"/></g>
<g fill="#fff" stroke="#666"><rect x="725.500" y="286.500" width="9" height="11"/><rect x="730.500" y="291.500" width="9" height="8.500"/></g><path d="M727 289h6M727 292h3M732 294h6M732 297h6" stroke="#3c78b4" stroke-width=".7"/>
<rect x="726" y="312" width="12" height="15" rx="1" fill="#e9c27a"/><rect x="729.500" y="310" width="5" height="3" fill="#777"/><path d="M733 316h5l2 2v9h-7z" fill="#fff" stroke="#666"/>
<rect x="751.500" y="338.500" width="16" height="18.500" rx="1" fill="#e9c27a"/><rect x="756" y="335" width="7" height="4" fill="#777"/><path d="M761 344h7l3 3v10h-10z" fill="#fff" stroke="#666"/>
<rect x="781.500" y="338.500" width="14" height="18" rx="1" fill="#e9c27a"/><rect x="786" y="335" width="6" height="4" fill="#777"/><rect x="785" y="344" width="16" height="13" fill="#fff" stroke="#666"/><path d="M787 355l5-4 3 2 3-2 2 4z" fill="#3c78b4"/>
<rect x="725.500" y="367.500" width="14" height="11" fill="#fff" stroke="#777"/><text x="727" y="376" style="font-size:7.500px;fill:#3c78b4">A</text><path d="M733 370h5M733 373h5M733 376h5" stroke="#888" stroke-width=".8"/>
<path d="M728 396l6-2 4 4M736 400l-8 3" fill="none" stroke="#3c78b4" stroke-dasharray="2 1"/><g fill="#3c78b4"><rect x="725" y="400" width="3" height="3"/><rect x="729" y="393" width="3" height="3"/><rect x="737" y="393" width="3" height="3"/><rect x="737" y="402" width="3" height="3"/></g>
<g opacity=".45"><rect x="727" y="420" width="11" height="11" fill="none" stroke="#888"/><rect x="730" y="424" width="9" height="7" fill="#fff" stroke="#888"/><g fill="#888"><rect x="725" y="418" width="3" height="3"/><rect x="738" y="418" width="3" height="3"/><rect x="725" y="431" width="3" height="3"/><rect x="738" y="431" width="3" height="3"/></g></g>
<path d="M725.500 448v-4h5M739.500 452v4h-5" fill="none" stroke="#555"/><rect x="728" y="446" width="9" height="9" fill="#e9c27a"/>
<rect x="725.500" y="468.500" width="5.500" height="5.500" fill="#fff" stroke="#555"/><rect x="734" y="477" width="5.500" height="5.500" fill="#fff" stroke="#555"/><rect x="729" y="472" width="7" height="7" fill="#e9c27a"/>
<circle cx="731" cy="498" r="5.500" fill="#fff" stroke="#666"/><path d="M725.500 498h11M731 492.500v11" stroke="#666" stroke-width=".8"/><rect x="727" y="504" width="9" height="4.500" rx="2.200" fill="none" stroke="#3c78b4" stroke-width="1.500"/><rect x="732" y="502" width="8" height="4.500" rx="2.200" fill="none" stroke="#3c78b4" stroke-width="1.500"/>
<circle cx="735" cy="529" r="6" fill="#fff" stroke="#3c78b4" stroke-width="1.400"/><path d="M730 534l-4 4" stroke="#3c78b4" stroke-width="2"/><path d="M735 526v.8M735 528v4" stroke="#555" stroke-width="1.200"/>
<rect x="737.500" y="602" width="3" height="14" fill="none" stroke="#555"/><rect x="727" y="607" width="3.500" height="3.500" fill="none" stroke="#555"/><path d="M728.500 604l-3 3M728.500 604l3 3M728.500 615l-3-3M728.500 615l3-3" stroke="#3c78b4"/>
<path d="M726 630l4-4 6 6-4 4z" fill="#fff" stroke="#666"/><path d="M740 630l-9 9-3 2 1-4 8-7z" fill="#3c78b4"/>
<path d="M871 502V518L875 515L878 521L880.500 520L878 514L883 513Z" fill="#fff" stroke="#111"/>

<!-- mini toolbar -->
<rect x="719.500" y="664.500" width="124.500" height="70.500" fill="#fff" stroke="#c6c6c6"/>
<rect x="733" y="674" width="19" height="17" rx="3" fill="none" stroke="#888"/><path d="M751 680l3 4-12 9-5 0 1-4z" fill="#3c78b4"/>
<path d="M772 681l8-7 9 9-7 7z" fill="#fff" stroke="#666"/><path d="M780 674v-3h2v3" stroke="#666" fill="none"/>
<path d="M789 683c1 2 2 3 2 4a1.500 1.500 0 0 1-3 0c0-1 0-2 1-4z" fill="#444"/>
<rect x="769" y="689" width="24" height="6" fill="#9b2335"/>
<path d="M828 675h-20v14" fill="none" stroke="#888"/><path d="M832 672l-2-1-14 14 1 3 4-1z" fill="#3c78b4"/>
<rect x="808" y="689" width="24" height="6" fill="#ef8200"/>
<path d="M755 682h5l-2.500 3zM794 682h5l-2.500 3zM833 682h5l-2.500 3z" fill="#666"/>
<text x="742" y="716.500" class="m">样式</text><text x="781" y="716.500" class="m">填充</text><text x="820" y="716.500" class="m">轮廓</text>

<!-- third arrow -->
<g fill="#f4000a" filter="url(#sh)">
<path d="M627 607L713 521.500L715 523.500L629 609Z"/>
<path d="M730 508L708 519L715 521L720 530Z"/>
</g>

<!-- watermark -->
<rect x="1168" y="898" width="463" height="110" fill="#000"/>
<rect x="1168" y="898" width="185" height="110" rx="24" fill="#0066ff"/>
<text x="1178" y="985" textLength="165" lengthAdjust="spacingAndGlyphs" style="font-size:95px;font-weight:bold;fill:#fff">TAG</text>
<text x="1371" y="947" textLength="242" style="font-family:'Liberation Serif','Noto Serif CJK SC',serif;font-size:48px;font-weight:900;fill:#f0101a">电脑技术网</text>
<text x="1368" y="997" textLength="247" lengthAdjust="spacingAndGlyphs" style="font-family:'Liberation Serif',serif;font-size:35px;font-weight:bold;fill:#1a78e0">www.tagxp.com</text>
</svg>
</body></html>
